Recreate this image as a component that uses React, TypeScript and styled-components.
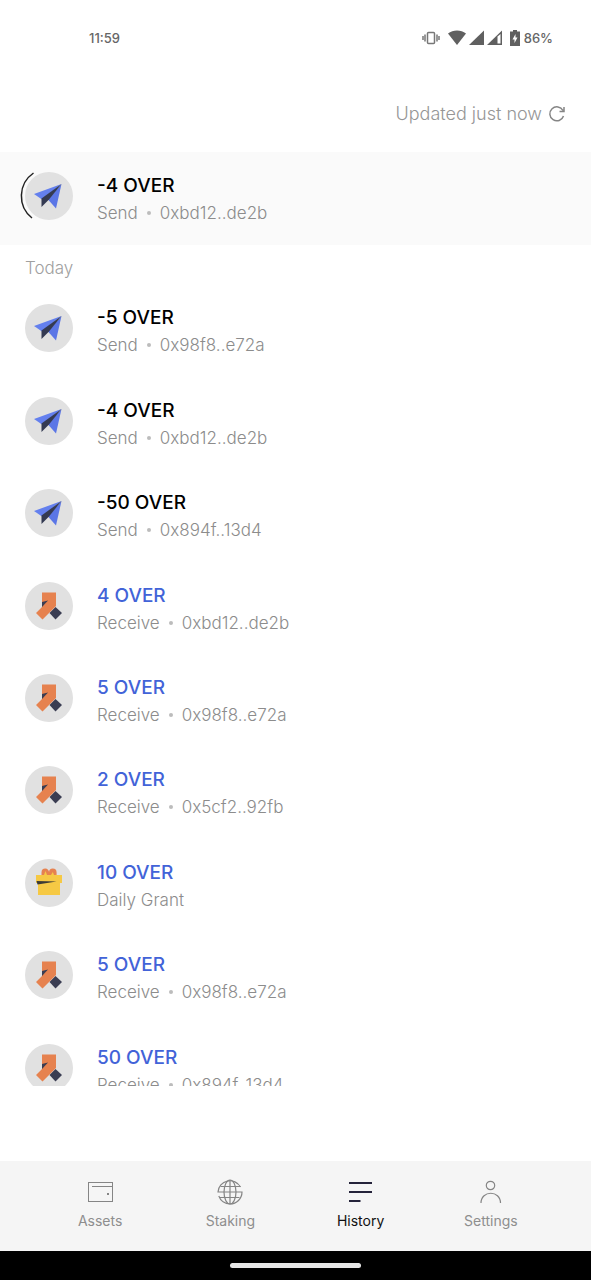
import React from "react";
import styled, { createGlobalStyle } from "styled-components";

const GlobalStyle = createGlobalStyle`
  *, *::before, *::after { box-sizing: border-box; }
  body {
    margin: 0;
    background: #ffffff;
    font-family: Inter, "Noto Sans", sans-serif;
  }
  svg { display: block; flex: none; }
`;

const Screen = styled.div`
  display: flex;
  flex-direction: column;
  height: 100vh;
  background: #ffffff;
`;

const StatusBar = styled.div`
  display: flex;
  flex: none;
  justify-content: space-between;
  align-items: center;
  height: 76px;
  padding: 0 38px 0 89px;
  font-size: 13px;
  font-weight: 500;
  line-height: 20px;
  color: #666666;
`;

const IconGroup = styled.div<{ $gap: number }>`
  display: flex;
  align-items: center;
  gap: ${(p) => p.$gap}px;
`;

const Header = styled.header`
  display: flex;
  flex: none;
  justify-content: flex-end;
  align-items: center;
  height: 76px;
  padding: 0 25px;
`;

const RefreshButton = styled.button`
  display: flex;
  align-items: center;
  gap: 6px;
  padding: 0;
  border: 0;
  background: none;
  font: inherit;
  font-size: 18px;
  font-weight: 300;
  line-height: 24px;
  color: #969696;
  cursor: pointer;
`;

const Feed = styled.main`
  flex: 1;
  min-height: 0;
  margin-bottom: 75px;
  overflow-y: auto;
  scrollbar-width: none;
`;

const Pending = styled.section`
  display: grid;
  height: 93px;
  padding-bottom: 6px;
  background: #fafafa;
`;

const DayTitle = styled.h2`
  margin: 0;
  padding: 11px 25px 2px;
  font-size: 17px;
  font-weight: 300;
  line-height: 24px;
  color: #a0a0a0;
`;

const DayList = styled.ul`
  display: grid;
  grid-auto-rows: 1fr;
  min-height: 832px;
  margin: 0;
  padding: 0;
  list-style: none;
`;

const Row = styled.div`
  display: flex;
  align-items: center;
  gap: 24px;
  padding: 0 25px;
`;

const Avatar = styled.div`
  position: relative;
  display: grid;
  flex: none;
  place-items: center;
  width: 48px;
  height: 48px;
  border-radius: 50%;
  background: #e1e1e1;
`;

const Ring = styled.svg`
  position: absolute;
  inset: -5px;
`;

const Summary = styled.div`
  padding-top: 6px;
`;

const Amount = styled.div<{ $incoming: boolean }>`
  font-size: 19px;
  font-weight: 500;
  line-height: 28px;
  color: ${(p) => (p.$incoming ? "#4263d8" : "#000000")};
`;

const Detail = styled.div`
  display: flex;
  align-items: center;
  gap: 9px;
  font-size: 17px;
  font-weight: 300;
  line-height: 26px;
  color: #8c8c8c;
`;

const Dot = styled.span`
  width: 4px;
  height: 4px;
  border-radius: 50%;
  background: #bcbcbc;
`;

const Nav = styled.nav`
  display: flex;
  flex: none;
  height: 90px;
  padding: 0 35px;
  background: #f5f5f5;
`;

const NavItem = styled.a<{ $active?: boolean }>`
  display: flex;
  flex: 1;
  flex-direction: column;
  align-items: center;
  gap: 5px;
  padding-top: 17px;
  font-size: 14px;
  line-height: 20px;
  text-decoration: none;
  color: ${(p) => (p.$active ? "#111111" : "#8e8e8e")};
`;

const GestureBar = styled.div`
  display: flex;
  flex: none;
  justify-content: center;
  align-items: center;
  height: 29px;
  background: #000000;
`;

const GestureHandle = styled.div`
  width: 131px;
  height: 5px;
  border-radius: 3px;
  background: #e6e6e6;
`;

const PlaneIcon = () => (
  <svg width="48" height="48" viewBox="0 0 48 48">
    <path d="M36.500 12 23 27.500l8 9z" fill="#5b76e6" />
    <path d="M36.500 12 9 22l8 5.500z" fill="#6480ee" />
    <path d="M36.500 12 16.500 26.500v8.500l7.500-7.500z" fill="#343a52" />
  </svg>
);

const ArrowIcon = () => (
  <svg width="48" height="48" viewBox="0 0 48 48">
    <path d="m30.500 25 6.500 6-6.500 6.500-6-6.500z" fill="#3a3d52" />
    <path d="M17 10.500h14V24L17.500 37.500 11 31l6-6z" fill="#e6824f" />
    <path d="m17 20 6-1.500-6 6.500z" fill="#3a3d52" />
  </svg>
);

const GiftIcon = () => (
  <svg width="48" height="48" viewBox="0 0 48 48">
    <path
      d="M17.500 17v-3.500a2.800 3 0 0 1 5.600 0V17M25 17v-3.500a2.800 3 0 0 1 5.600 0V17"
      fill="#e6824f"
      stroke="#e6824f"
      strokeWidth="2"
    />
    <path d="M11 16h8l1.500-4 1.500 4h4l1.800-3 1.200 3h8v8h-2v12H13V24h-2z" fill="#f6c944" />
    <path d="m11.500 22 20 .5-19 3z" fill="#3c3a36" />
  </svg>
);

const icons = { send: PlaneIcon, receive: ArrowIcon, grant: GiftIcon };

type Transaction = {
  kind: keyof typeof icons;
  amount: string;
  label: string;
  address?: string;
};

const send = (amount: string, address: string): Transaction => ({
  kind: "send",
  amount,
  label: "Send",
  address,
});

const receive = (amount: string, address: string): Transaction => ({
  kind: "receive",
  amount,
  label: "Receive",
  address,
});

const today: Transaction[] = [
  send("-5 OVER", "0x98f8..e72a"),
  send("-4 OVER", "0xbd12..de2b"),
  send("-50 OVER", "0x894f..13d4"),
  receive("4 OVER", "0xbd12..de2b"),
  receive("5 OVER", "0x98f8..e72a"),
  receive("2 OVER", "0x5cf2..92fb"),
  { kind: "grant", amount: "10 OVER", label: "Daily Grant" },
  receive("5 OVER", "0x98f8..e72a"),
  receive("50 OVER", "0x894f..13d4"),
];

function TransactionRow({
  tx,
  as,
  pending,
}: {
  tx: Transaction;
  as?: "li";
  pending?: boolean;
}) {
  const Icon = icons[tx.kind];
  return (
    <Row as={as}>
      <Avatar>
        <Icon />
        {pending && (
          <Ring width="58" height="58" viewBox="0 0 58 58">
            <path
              d="M13.500 6A28 28 0 0 0 12 51"
              fill="none"
              stroke="#222222"
              strokeWidth="1.500"
            />
          </Ring>
        )}
      </Avatar>
      <Summary>
        <Amount $incoming={tx.kind !== "send"}>{tx.amount}</Amount>
        <Detail>
          <span>{tx.label}</span>
          {tx.address && (
            <>
              <Dot />
              <span>{tx.address}</span>
            </>
          )}
        </Detail>
      </Summary>
    </Row>
  );
}

const VibrateIcon = () => (
  <svg width="18" height="18" viewBox="0 0 18 18" stroke="#777777" fill="none">
    <rect x="5.500" y="3.500" width="7" height="11" rx="1" strokeWidth="1.500" />
    <path d="M3 5.500v7M15 5.500v7M1 7v4M17 7v4" strokeWidth="1.500" />
  </svg>
);

const WifiIcon = () => (
  <svg width="18" height="18" viewBox="0 0 18 18">
    <path d="M0 4.500C5 .500 13 .500 18 4.500L9 16z" fill="#606060" />
  </svg>
);

const SignalIcon = ({ partial }: { partial?: boolean }) => (
  <svg width="15" height="18" viewBox="0 0 15 18">
    <path d="M15 1.500V16H0z" fill="#606060" />
    {partial && <path d="M10.500 7.500 13.500 5v9.500h-3z" fill="#ffffff" />}
  </svg>
);

const BatteryIcon = () => (
  <svg width="10" height="18" viewBox="0 0 10 18">
    <path d="M3 1h4v1.500h3V17H0V2.500h3z" fill="#606060" />
    <path d="M5.500 5 2.500 10.500h2V14l3-5.500h-2z" fill="#ffffff" />
  </svg>
);

const RefreshIcon = () => (
  <svg
    width="18"
    height="18"
    viewBox="0 0 18 18"
    fill="none"
    stroke="#858585"
    strokeWidth="1.500"
  >
    <path d="M15.500 11A7 7 0 1 1 15 5.500M16 2v4.500h-4.500" />
  </svg>
);

const WalletIcon = () => (
  <svg width="28" height="28" viewBox="0 0 28 28" fill="none" stroke="#858585">
    <rect x="2.500" y="4.500" width="24" height="19" />
    <path d="M6 8.500h20.500" />
    <path d="M21 16h2" strokeWidth="2" />
  </svg>
);

const GlobeIcon = () => (
  <svg
    width="28"
    height="28"
    viewBox="0 0 28 28"
    fill="none"
    stroke="#858585"
    strokeWidth="1.200"
  >
    <path d="M24.500 9A12 12 0 0 0 2 14h24A12 12 0 0 1 14 26 12 12 0 0 1 2.800 18" />
    <ellipse cx="14" cy="14" rx="6" ry="12" />
    <path d="M14 2v24M4.500 8.500h20M3 19.500h20.500" />
  </svg>
);

const HistoryIcon = () => (
  <svg width="28" height="28" viewBox="0 0 28 28">
    <path
      d="M2 5h23M2 14h23M2 23h11.500"
      stroke="#25233a"
      strokeWidth="2"
    />
  </svg>
);

const PersonIcon = () => (
  <svg
    width="28"
    height="28"
    viewBox="0 0 28 28"
    fill="none"
    stroke="#858585"
    strokeWidth="1.200"
  >
    <circle cx="13.500" cy="7.500" r="4.200" />
    <path d="M4 25c0-13 19.500-13 19.500 0" />
  </svg>
);

export default function App() {
  return (
    <>
      <GlobalStyle />
      <Screen>
        <StatusBar>
          <span>11:59</span>
          <IconGroup $gap={8}>
            <VibrateIcon />
            <IconGroup $gap={3}>
              <WifiIcon />
              <SignalIcon />
              <SignalIcon partial />
            </IconGroup>
            <IconGroup $gap={4}>
              <BatteryIcon />
              <span>86%</span>
            </IconGroup>
          </IconGroup>
        </StatusBar>
        <Header>
          <RefreshButton type="button">
            Updated just now
            <RefreshIcon />
          </RefreshButton>
        </Header>
        <Feed>
          <Pending>
            <TransactionRow tx={send("-4 OVER", "0xbd12..de2b")} pending />
          </Pending>
          <DayTitle>Today</DayTitle>
          <DayList>
            {today.map((tx, i) => (
              <TransactionRow key={i} as="li" tx={tx} />
            ))}
          </DayList>
        </Feed>
        <Nav>
          <NavItem href="#assets">
            <WalletIcon />
            Assets
          </NavItem>
          <NavItem href="#staking">
            <GlobeIcon />
            Staking
          </NavItem>
          <NavItem href="#history" $active aria-current="page">
            <HistoryIcon />
            History
          </NavItem>
          <NavItem href="#settings">
            <PersonIcon />
            Settings
          </NavItem>
        </Nav>
        <GestureBar>
          <GestureHandle />
        </GestureBar>
      </Screen>
    </>
  );
}
